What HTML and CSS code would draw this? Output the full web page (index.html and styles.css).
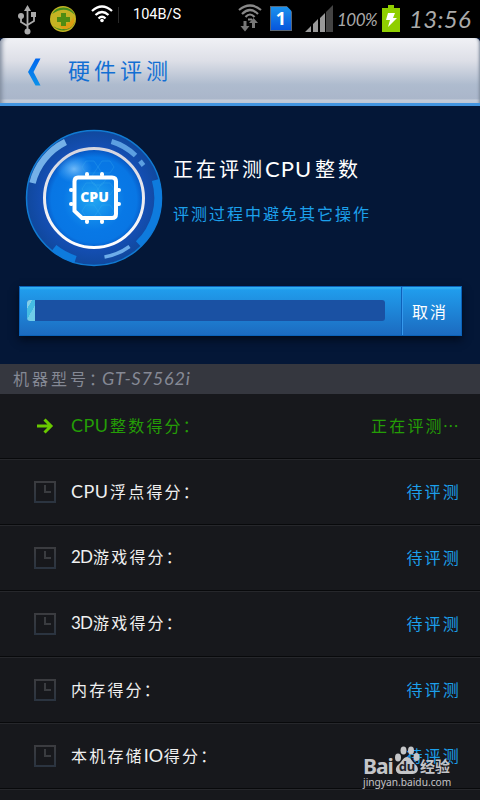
FILE: index.html
```html
<!DOCTYPE html>
<html lang="zh-CN">
<head>
<meta charset="utf-8">
<title>硬件评测</title>
<link rel="stylesheet" href="styles.css">
</head>
<body>
<div class="screen">
  <div class="statusbar">
    <svg class="usb" width="20" height="30" viewBox="0 0 20 30" fill="none" stroke="#aaa" stroke-width="1.8"><path d="M9.500 4V26M3 12V17L9.500 21M16 10V16L9.500 20"/><g fill="#aaa" stroke="none"><path d="M9.500 0L13 6H6Z"/><circle cx="3" cy="11" r="3"/><path d="M13 7h5v5h-5z"/><circle cx="9.500" cy="26.500" r="3"/></g></svg>
    <svg class="safe" width="26" height="26" viewBox="0 0 26 26"><circle cx="13" cy="13" r="13" fill="#c5b323"/><path d="M2 8A13 13 0 0 1 25 9Q15-1 2 8ZM3 20Q14 28 25 16A13 13 0 0 1 3 20Z" fill="#428b1d"/><path d="M9 19Q23 18 23 10Q27 20 17 23Q12 24 9 19Z" fill="#dc9d12"/><path d="M11 7h5v4h4v5h-4v4h-5v-4H7v-5h4z" fill="#4f8c13"/></svg>
    <svg class="wifi" width="22" height="18" viewBox="0 0 22 18" fill="none" stroke="#fff" stroke-width="2.300"><path d="M1 6Q11-3 21 6M4.500 10Q11 4 17.500 10M7.500 13.500Q11 10 14.500 13.500"/><circle cx="11" cy="15.500" r="1.800" fill="#fff" stroke="none"/></svg>
    <span class="speed">104B/S</span>
    <svg class="link" width="24" height="28" viewBox="0 0 24 28" fill="none" stroke="#888" stroke-width="2.200"><path d="M1 6Q12-3 23 6M4 10Q12 2 20 10M7.500 13Q12 8 16.500 13M10 15.500h4"/><g fill="#777" stroke="none"><path d="M5.500 17h3v5h3l-4.500 5.500L2.500 22h3zM14 24v-5h-3l4.500-5L20 19h-3v5z"/></g></svg>
    <span class="sim">1</span>
    <svg class="signal" width="28" height="27" viewBox="0 0 28 27"><path d="M0 27L6 21V27ZM8 27V19L13 14V27ZM15 27V13L20 8V27Z" fill="#999"/><path d="M21 27V7L28 0V27Z" fill="#444"/></svg>
    <span class="percent">100%</span>
    <svg class="battery" width="18" height="28" viewBox="0 0 18 28"><path d="M6 1h6v3h6v24H0V4h6z" fill="#8fce00"/><path d="M6 9h7l-2 5h4L6 23l2-7H4z" fill="#fff"/></svg>
    <span class="clock">13:56</span>
  </div>
  <div class="header">
    <div class="titlebar">
      <svg width="13" height="28" viewBox="0 0 13 28"><defs><linearGradient id="back" x2="0" y2="1"><stop stop-color="#0067ef"/><stop offset="1" stop-color="#0b91ea"/></linearGradient></defs><path d="M7.500 0.500H12.500L5.500 14L12.500 27.500H7.500L0 14Z" fill="url(#back)"/></svg>
      <h1>硬件评测</h1>
    </div>
  </div>
  <div class="hero">
    <div class="summary">
      <svg class="badge" width="138" height="138" viewBox="0 0 138 138">
        <defs>
          <radialGradient id="ring"><stop offset=".7" stop-color="#1550b8"/><stop offset="1" stop-color="#10489d"/></radialGradient>
          <radialGradient id="core" cx=".5" cy=".52" r=".52"><stop stop-color="#21a6f2"/><stop offset=".6" stop-color="#0878e6"/><stop offset=".83" stop-color="#0876e4"/><stop offset="1" stop-color="#0751bd"/></radialGradient>
          <radialGradient id="shine"><stop stop-color="#9bd4ff" stop-opacity=".7"/><stop offset="1" stop-color="#5ab8ff" stop-opacity="0"/></radialGradient>
          <linearGradient id="rim" x2="0" y2="1"><stop stop-color="#d5d5df"/><stop offset="1" stop-color="#fff"/></linearGradient>
        </defs>
        <circle cx="69" cy="69" r="67.500" fill="url(#ring)" stroke="#117bd3" stroke-width="1.500"/>
        <g fill="none">
          <path d="M7.500 54A63 63 0 0 1 40.500 13" stroke="#75b1e8" stroke-width="6.500"/>
          <path d="M86.500 12.500A60 60 0 0 1 110.500 26.500" stroke="#5c9fe1" stroke-width="5"/>
          <path d="M115 32L118.500 36.500" stroke="#5c9fe1" stroke-width="4.500"/>
          <path d="M130.500 51A64 64 0 0 1 113.500 115" stroke="#0e7bdd" stroke-width="7.500"/>
          <path d="M29 119A64 64 0 0 0 50.500 130.500" stroke="#0e7bdd" stroke-width="7.500"/>
          <path d="M79.500 128A60 60 0 0 0 104.500 117.500" stroke="#6dadea" stroke-width="3.500"/>
        </g>
        <circle cx="69" cy="69" r="49.500" fill="url(#core)" stroke="url(#rim)" stroke-width="3"/>
        <ellipse cx="49" cy="40" rx="18" ry="14" fill="url(#shine)"/>
        <path d="M57 38l4-6h8l4 6-4 6h-8zM73 38l4-6h8l4 6-4 6h-8zM65 50l4-6h8l4 6-4 6h-8zM57 60l4-6h8l4 6-4 6h-8zM73 60l4-6h8l4 6-4 6h-8zM57 82l4-6h8l4 6-4 6h-8zM73 82l4-6h8l4 6-4 6h-8z" fill="none" stroke="#43b9f0" stroke-opacity=".25"/>
        <path d="M53 48.500H87Q91 48.500 91 52.500V85Q91 89 87 89H57L49.500 82V52.500Q49.500 48.500 53 48.500Z" fill="none" stroke="#fff" stroke-width="4"/>
        <path d="M62 46V45M77 46V45M62 92V93M77 92V93M46.500 61H46M46.500 75H46M93.500 61H94M93.500 75H94" stroke="#fff" stroke-width="4" stroke-linecap="round"/>
        <text class="chip" x="69.500" y="73" text-anchor="middle">CPU</text>
      </svg>
      <div class="copy">
        <h2>正在评测<span>CPU</span>整数</h2>
        <p>评测过程中避免其它操作</p>
      </div>
    </div>
    <div class="progress">
      <div class="gauge"><div class="track"><div class="fill"></div></div></div>
      <div class="cancel">取消</div>
    </div>
  </div>
  <div class="model">机器型号：<span>GT-S7562i</span></div>
  <div class="list">
    <div class="row active">
      <svg class="mark" width="22" height="22" viewBox="0 0 22 22" fill="none" stroke="#69c900" stroke-width="3"><path d="M3 11H17M10.500 4.500L17 11L10.500 17.500"/></svg>
      <div class="name"><span class="cpu">CPU</span>整数得分：</div><div class="state">正在评测<span class="dots">⋯</span></div>
    </div>
    <div class="row">
      <svg class="mark" viewBox="0 0 22 22"><use href="#wait"/></svg>
      <div class="name"><span class="cpu">CPU</span>浮点得分：</div><div class="state">待评测</div>
    </div>
    <div class="row">
      <svg class="mark" viewBox="0 0 22 22"><use href="#wait"/></svg>
      <div class="name"><span class="dim">2D</span>游戏得分：</div><div class="state">待评测</div>
    </div>
    <div class="row">
      <svg class="mark" viewBox="0 0 22 22"><use href="#wait"/></svg>
      <div class="name"><span class="dim">3D</span>游戏得分：</div><div class="state">待评测</div>
    </div>
    <div class="row">
      <svg class="mark" viewBox="0 0 22 22"><use href="#wait"/></svg>
      <div class="name">内存得分：</div><div class="state">待评测</div>
    </div>
    <div class="row">
      <svg class="mark" viewBox="0 0 22 22"><use href="#wait"/></svg>
      <div class="name">本机存储<span class="io">IO</span>得分：</div><div class="state">待评测</div>
    </div>
  </div>
  <div class="watermark">
    <div class="brand"><span class="bai">Bai</span><svg width="26" height="29" viewBox="0 0 26 29"><g fill="#c4c5c8"><ellipse cx="4" cy="11.500" rx="3" ry="4"/><ellipse cx="9.500" cy="4.500" rx="3" ry="4"/><ellipse cx="17" cy="4.500" rx="3" ry="4"/><ellipse cx="22.500" cy="11" rx="3" ry="4"/><path d="M13 11C17 11 18 16 22 19C26 23 23 28 19 28H7C2 28 0 23 4 19C8 16 9 11 13 11Z"/></g><text class="du" x="13" y="25" text-anchor="middle">du</text></svg><span class="jing">经验</span></div>
    <div class="url">jingyan.baidu.com</div>
  </div>
</div>
<svg class="defs" width="0" height="0"><defs><linearGradient id="box" x2="0" y2="1"><stop stop-color="#3b3c40"/><stop offset="1" stop-color="#2b3440"/></linearGradient><g id="wait" fill="none"><rect x="1" y="1" width="20" height="20" stroke="url(#box)" stroke-width="2"/><path d="M11 4V11H17" stroke="#3a3c40" stroke-width="2"/></g></defs></svg>
</body>
</html>
```
FILE: styles.css
```css
* { box-sizing: border-box; }
body { margin: 0; background: #17181c; font-family: "Noto Sans CJK SC", sans-serif; }
h1, h2, p { margin: 0; font-weight: 400; }
svg { display: block; flex: none; }
.screen { position: relative; width: 480px; height: 800px; overflow: hidden; }

.statusbar { display: flex; height: 38px; background: #000; color: #aaa; font-family: Lato, sans-serif; align-items: flex-start; white-space: nowrap; }
.statusbar > * { flex: none; }
.usb { margin: 5px 0 0 18px; }
.safe { margin: 6px 0 0 12px; }
.wifi { margin: 5px 0 0 15px; }
.speed { margin: 7px 0 0 5px; padding-left: 14px; width: 110px; border-left: 1px solid #282828; color: #fff; font: 14.500px/16px Roboto, sans-serif; }
.link { margin: 4px 0 0 10px; }
.sim { margin: 6px 0 0 8px; width: 22px; height: 25px; background: linear-gradient(#1b92ed, #0755dc); border: 1px solid #596777; clip-path: polygon(0 0, 76% 0, 100% 22%, 100% 100%, 0 100%); color: #fff; font: bold 18px/23px "Noto Sans", sans-serif; text-align: center; }
.signal { margin: 5px 0 0 13px; }
.percent { margin: 9px 0 0 4px; width: 40px; font-size: 17px; line-height: 22px; font-style: italic; font-weight: 400; letter-spacing: -.5px; }
.battery { margin: 4px 0 0 5px; }
.clock { margin: 3px 0 0 9px; font-size: 24px; line-height: 31px; font-style: italic; font-weight: 400; letter-spacing: .3px; }

.header { height: 68px; background: #041434; }
.titlebar { display: flex; align-items: center; height: 68px; padding: 0 0 0 28px; border-bottom: 3px solid #4395e0; border-radius: 5px 5px 0 0; background: linear-gradient(#f0f1f5, #dddfe7 35%, #aebbce 72%, #aab6ca 94%, #c3cbd8 95%); box-shadow: inset 5px 0 4px -3px #7f8b9d, inset -4px 0 3px -3px #7f8b9d; }
.titlebar svg { margin-top: 2px; }
h1 { margin: 0 0 3px 27px; color: #126fd3; font-size: 22px; line-height: 32px; letter-spacing: 4px; }

.hero { height: 258px; padding: 22px 18px 0 19px; background: #041737; }
.summary { display: flex; height: 158px; }
.badge { margin: 1px 0 0 6px; }
.chip { fill: #fff; font: 900 14px "Noto Sans", sans-serif; }
.copy { margin: 25px 0 0 10px; }
h2 { color: #fff; font-size: 20px; line-height: 32px; letter-spacing: 3px; white-space: nowrap; }
h2 span { display: inline-block; width: 50px; font: 22px/30px Lato, sans-serif; letter-spacing: 1px; }
.copy p { margin-top: 14px; color: #1ca0eb; font-size: 16px; line-height: 28px; letter-spacing: 2px; }
.progress { display: flex; height: 50px; border: 1px solid #0b62b8; background: linear-gradient(#33b1f1 0 1px, #209cec 3px, #1c6bc0); box-shadow: 0 4px 8px #020b1c; }
.gauge { width: 382px; padding: 13px 0 0 7px; }
.track { width: 358px; height: 21px; background: #1a51a3; border-radius: 3px; }
.fill { width: 8px; height: 21px; border-radius: 3px 0 0 3px; background: linear-gradient(120deg, #83cfe8 25%, #45bce3 26% 55%, #70cde9 56%); }
.cancel { flex: 1; padding-left: 9px; border-left: 1px solid #3699ed; box-shadow: -1px 0 #0d61b9; color: #fff; font-size: 16px; line-height: 48px; letter-spacing: 2px; }

.model { display: flex; height: 30px; padding-left: 13px; background: #35373f; color: #858995; font-size: 16px; line-height: 29px; letter-spacing: 3px; white-space: nowrap; }
.model span { margin-left: -6px; font-family: Lato, sans-serif; font-size: 18px; font-style: italic; letter-spacing: .8px; }

.row { display: flex; align-items: center; height: 66px; padding: 0 19px 2px 34px; border-bottom: 1px solid #26272b; box-shadow: inset 0 -1px #08090b; color: #f0f0f0; font-size: 16px; letter-spacing: 2.200px; white-space: nowrap; }
.mark { width: 22px; height: 22px; }
.name { margin: 0 0 2px 15px; flex: 1; line-height: 28px; }
.name span { display: inline-block; font: 18px/28px Lato, sans-serif; letter-spacing: .4px; }
.cpu { width: 39px; }
.name .dim { width: 22px; font-size: 17px; letter-spacing: -.8px; }
.name .io { width: 20px; letter-spacing: 0; }
.state { margin-bottom: 2px; color: #1ca0eb; line-height: 28px; }
.active, .active .state { color: #249d06; }
.dots { margin-left: -1px; }

.watermark { position: absolute; left: 363px; top: 746px; width: 90px; color: #c4c5c8; }
.brand { display: flex; height: 29px; align-items: flex-end; }
.bai { width: 31px; font: bold 21px/18px "Noto Sans", sans-serif; letter-spacing: -1px; }
.du { fill: #222329; font: bold 13px "Noto Sans", sans-serif; }
.jing { font-size: 15px; line-height: 18px; font-weight: 700; }
.url { font: 10.200px/14px "Noto Sans", sans-serif; white-space: nowrap; }
.defs { position: absolute; }
```
